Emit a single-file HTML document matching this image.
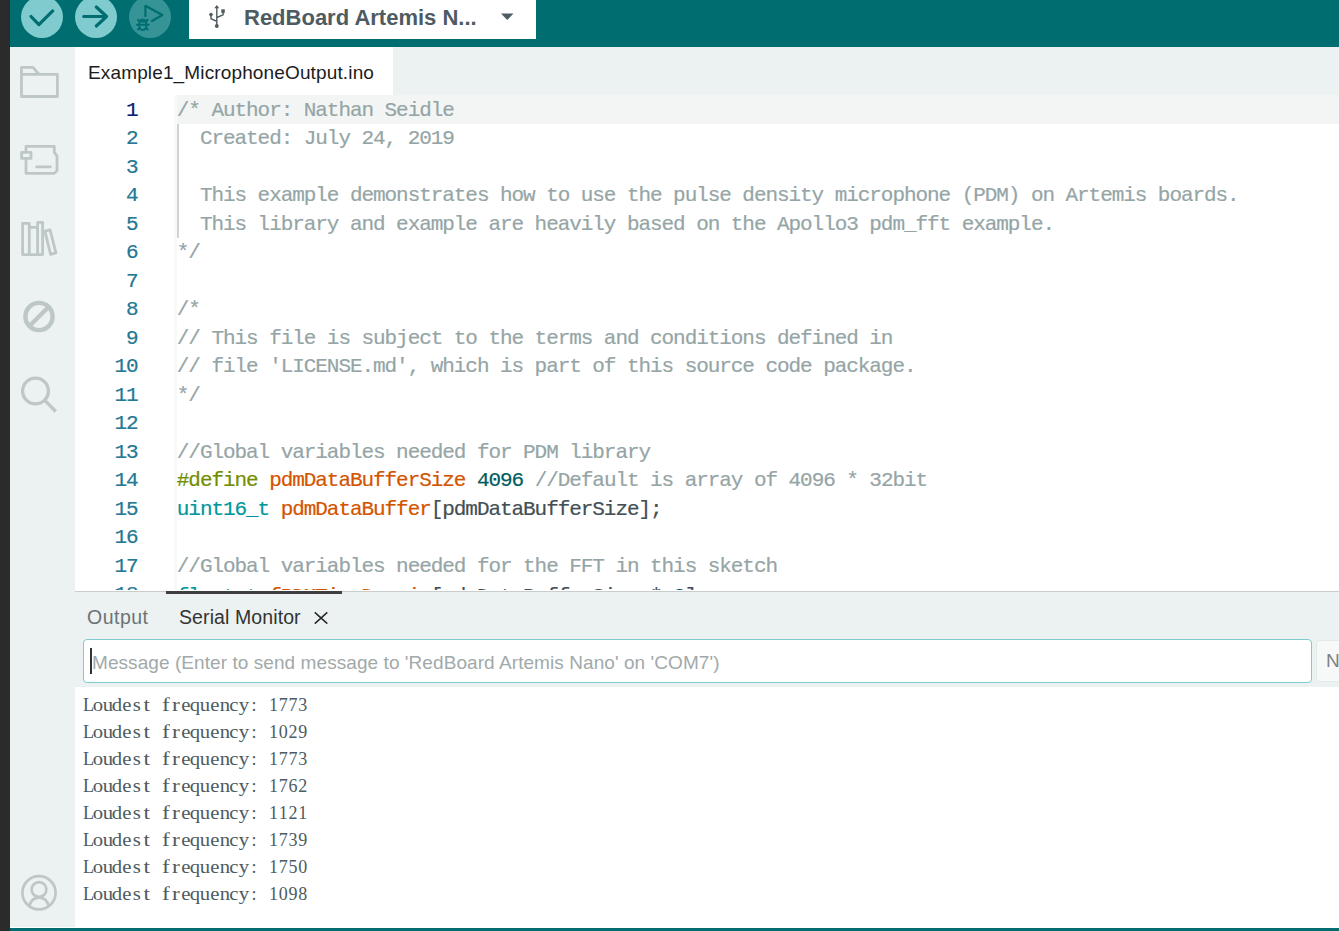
<!DOCTYPE html>
<html><head><meta charset="utf-8">
<style>
*{margin:0;padding:0;box-sizing:border-box}
html,body{width:1339px;height:931px;overflow:hidden;background:#fff;font-family:"Liberation Sans",sans-serif}
.abs{position:absolute}
#strip{left:0;top:0;width:10px;height:931px;background:#2b2b2b}
#header{left:10px;top:0;width:1329px;height:47px;background:#006d70}
.btn{position:absolute;width:42px;height:42px;border-radius:50%;background:#7fcbcd}
#board{left:189px;top:0;width:347px;height:39px;background:#fff}
#boardname{left:244px;top:3px;font-weight:bold;font-size:22px;color:#4e5b61;white-space:nowrap;line-height:30px}
#sidebar{left:10px;top:47px;width:65px;height:880px;background:#ecf1f1}
#tabbar{left:75px;top:47px;width:1264px;height:48px;background:#ecf1f1}
#tab{left:75px;top:47px;width:318px;height:48px;background:#fff}
#tabtext{left:88px;top:61px;font-size:19px;letter-spacing:0.14px;color:#1c1c1c;white-space:nowrap;line-height:24px}
#editor{left:75px;top:95px;width:1264px;height:495px;background:#fff;overflow:hidden}
#curline{left:99px;top:0;width:1165px;height:29px;background:#f3f5f5}
#margin{left:99px;top:0;width:3px;height:496px;background:#f8f9f9}
#guide{left:102px;top:29px;width:1.5px;height:114px;background:#d3d3d3}
.code{position:absolute;left:101.8px;-webkit-text-stroke:0.2px;top:1.8px;font-family:"Liberation Mono",monospace;font-size:21px;letter-spacing:-1.06px;line-height:28.5px;white-space:pre;color:#434f54}
.ln{position:absolute;left:0;top:1.8px;width:62.5px;-webkit-text-stroke:0.2px;text-align:right;font-family:"Liberation Mono",monospace;font-size:21px;letter-spacing:-1.06px;line-height:28.5px;white-space:pre;color:#237893}
.c{color:#95a5a6}.k{color:#728e00}.o{color:#d35400}.n{color:#005c5f}.t{color:#00979c}
#panel{left:75px;top:591px;width:1264px;height:96px;background:#ecf1f1;border-top:1px solid #c9cdcd}
#thumb{left:166px;top:591px;width:176px;height:2.5px;background:#3f3f3f}
#out{left:87px;top:605.3px;font-size:19.5px;color:#6b7475;white-space:nowrap;line-height:24px;letter-spacing:0.5px}
#sm{left:179px;top:605.3px;font-size:19.5px;color:#333;white-space:nowrap;line-height:24px;letter-spacing:0.1px}
#input{left:83px;top:639px;width:1229px;height:44px;background:#fff;border:1.5px solid #7fcbcd;border-radius:4px}
#caret{left:90px;top:648px;width:2px;height:26px;background:#333}
#ph{left:92px;top:650.5px;font-size:19px;letter-spacing:0.07px;color:#a1a9aa;white-space:nowrap;line-height:24px}
#le{left:1316px;top:640px;width:40px;height:42px;background:#f7f9f9;border:1px solid #e3e8e8;border-radius:3px}
#letext{left:1326px;top:649px;font-size:19px;color:#7b8283;line-height:24px}
#serial{left:83px;top:691.5px;font-family:"Liberation Serif",serif;font-size:18px;line-height:27px;white-space:pre;color:#4e5b61}
.sl{height:27px;white-space:nowrap}.sl i{font-style:normal;display:inline-block;width:9.77px;text-align:center}.sl i.w{transform:scaleX(1.15)}.sl i.w2{transform:scaleX(1.3)}
#status{left:10px;top:928px;width:1329px;height:3px;background:#006d70}
svg{position:absolute;overflow:visible}
</style></head><body>
<div id="strip" class="abs"></div>
<div id="header" class="abs"></div>
<div class="btn" style="left:21px;top:-4.4px"></div>
<div class="btn" style="left:75px;top:-4.5px"></div>
<div class="btn" style="left:129px;top:-4.5px;background:#369496"></div>
<div id="board" class="abs"></div>
<div id="boardname" class="abs">RedBoard Artemis N...</div>
<div id="sidebar" class="abs"></div>
<div id="tabbar" class="abs"></div>
<div id="tab" class="abs"></div>
<div id="tabtext" class="abs">Example1_MicrophoneOutput.ino</div>
<div id="editor" class="abs">
<div id="curline" class="abs"></div>
<div id="margin" class="abs"></div>
<div id="guide" class="abs"></div>
<div class="ln"><span style="color:#0b216f">1</span>
2
3
4
5
6
7
8
9
10
11
12
13
14
15
16
17
18</div>
<div class="code"><span class="c">/* Author: Nathan Seidle
  Created: July 24, 2019

  This example demonstrates how to use the pulse density microphone (PDM) on Artemis boards.
  This library and example are heavily based on the Apollo3 pdm_fft example.
*/

/*
// This file is subject to the terms and conditions defined in
// file 'LICENSE.md', which is part of this source code package.
*/

//Global variables needed for PDM library</span>
<span class="k">#define</span> <span class="o">pdmDataBufferSize</span> <span class="n">4096</span> <span class="c">//Default is array of 4096 * 32bit</span>
<span class="t">uint16_t</span> <span class="o">pdmDataBuffer</span>[pdmDataBufferSize];

<span class="c">//Global variables needed for the FFT in this sketch</span>
<span style="position:relative;top:2px"><span class="t">float_t</span> <span class="o">fPDMTimeDomain</span>[pdmDataBufferSize * <span class="n">2</span>];</span></div>
</div>
<div id="panel" class="abs"></div>
<div id="thumb" class="abs"></div>
<div id="out" class="abs">Output</div>
<div id="sm" class="abs">Serial Monitor</div>
<div id="input" class="abs"></div>
<div id="caret" class="abs"></div>
<div id="ph" class="abs">Message (Enter to send message to 'RedBoard Artemis Nano' on 'COM7')</div>
<div id="le" class="abs"></div>
<div id="letext" class="abs">N</div>
<div id="serial" class="abs"><div class="sl"><i>L</i><i class="w">o</i><i class="w">u</i><i class="w">d</i><i class="w">e</i><i class="w">s</i><i class="w2">t</i><i> </i><i class="w2">f</i><i class="w2">r</i><i class="w">e</i><i class="w">q</i><i class="w">u</i><i class="w">e</i><i class="w">n</i><i class="w">c</i><i class="w">y</i><i>:</i><i> </i><i>1</i><i>7</i><i>7</i><i>3</i></div><div class="sl"><i>L</i><i class="w">o</i><i class="w">u</i><i class="w">d</i><i class="w">e</i><i class="w">s</i><i class="w2">t</i><i> </i><i class="w2">f</i><i class="w2">r</i><i class="w">e</i><i class="w">q</i><i class="w">u</i><i class="w">e</i><i class="w">n</i><i class="w">c</i><i class="w">y</i><i>:</i><i> </i><i>1</i><i>0</i><i>2</i><i>9</i></div><div class="sl"><i>L</i><i class="w">o</i><i class="w">u</i><i class="w">d</i><i class="w">e</i><i class="w">s</i><i class="w2">t</i><i> </i><i class="w2">f</i><i class="w2">r</i><i class="w">e</i><i class="w">q</i><i class="w">u</i><i class="w">e</i><i class="w">n</i><i class="w">c</i><i class="w">y</i><i>:</i><i> </i><i>1</i><i>7</i><i>7</i><i>3</i></div><div class="sl"><i>L</i><i class="w">o</i><i class="w">u</i><i class="w">d</i><i class="w">e</i><i class="w">s</i><i class="w2">t</i><i> </i><i class="w2">f</i><i class="w2">r</i><i class="w">e</i><i class="w">q</i><i class="w">u</i><i class="w">e</i><i class="w">n</i><i class="w">c</i><i class="w">y</i><i>:</i><i> </i><i>1</i><i>7</i><i>6</i><i>2</i></div><div class="sl"><i>L</i><i class="w">o</i><i class="w">u</i><i class="w">d</i><i class="w">e</i><i class="w">s</i><i class="w2">t</i><i> </i><i class="w2">f</i><i class="w2">r</i><i class="w">e</i><i class="w">q</i><i class="w">u</i><i class="w">e</i><i class="w">n</i><i class="w">c</i><i class="w">y</i><i>:</i><i> </i><i>1</i><i>1</i><i>2</i><i>1</i></div><div class="sl"><i>L</i><i class="w">o</i><i class="w">u</i><i class="w">d</i><i class="w">e</i><i class="w">s</i><i class="w2">t</i><i> </i><i class="w2">f</i><i class="w2">r</i><i class="w">e</i><i class="w">q</i><i class="w">u</i><i class="w">e</i><i class="w">n</i><i class="w">c</i><i class="w">y</i><i>:</i><i> </i><i>1</i><i>7</i><i>3</i><i>9</i></div><div class="sl"><i>L</i><i class="w">o</i><i class="w">u</i><i class="w">d</i><i class="w">e</i><i class="w">s</i><i class="w2">t</i><i> </i><i class="w2">f</i><i class="w2">r</i><i class="w">e</i><i class="w">q</i><i class="w">u</i><i class="w">e</i><i class="w">n</i><i class="w">c</i><i class="w">y</i><i>:</i><i> </i><i>1</i><i>7</i><i>5</i><i>0</i></div><div class="sl"><i>L</i><i class="w">o</i><i class="w">u</i><i class="w">d</i><i class="w">e</i><i class="w">s</i><i class="w2">t</i><i> </i><i class="w2">f</i><i class="w2">r</i><i class="w">e</i><i class="w">q</i><i class="w">u</i><i class="w">e</i><i class="w">n</i><i class="w">c</i><i class="w">y</i><i>:</i><i> </i><i>1</i><i>0</i><i>9</i><i>8</i></div></div>
<div id="status" class="abs"></div>
<svg width="1339" height="931" style="left:0;top:0" viewBox="0 0 1339 931">
<g fill="none" stroke="#006d70" stroke-linecap="round" stroke-linejoin="round">
<polyline points="31,16.5 38.9,24.6 52.7,10.9" stroke-width="3.2"/>
<path d="M83.7 16.5 H106.6 M96.3 7 L106.6 16.5 L96.3 26" stroke-width="3.1"/>
<path d="M145.4 16.1 V5.8 L162.3 15 L152 21" stroke-width="2.2"/>
<ellipse cx="142.8" cy="24.8" rx="3.7" ry="5.2" stroke-width="2"/>
<path d="M137 24.8 H148.7 M138 19.9 L139.7 21 M147.6 19.9 L145.9 21 M138 29.4 L139.6 28.4 M147.6 29.4 L146 28.4 M140 21.4 H145.6" stroke-width="2"/>
</g>
<g fill="none" stroke="#4e5b61" stroke-width="1.4">
<path d="M216.8 7.5 V26 M216.8 21.3 L211 18.7 V14.6 M216.8 17.5 L223.1 14.9 V11.5"/>
</g>
<g fill="#4e5b61">
<path d="M216.8 5 L219.3 8.2 H214.3 Z"/>
<circle cx="216.8" cy="26" r="1.9"/>
<circle cx="211" cy="14.6" r="1.8"/>
<rect x="221.3" y="9.3" width="3.5" height="3.6"/>
<path d="M501 13.5 H513.5 L507.25 20 Z"/>
</g>
<g fill="none" stroke="#bec7c7" stroke-width="2.8" stroke-linejoin="round">
<path d="M21.45 67.4 H33 L39 74.3 H57.4 V96.5 H21.45 Z M21.45 74.3 H39"/>
<path d="M26 146.4 H54.3 V152.4 L57 155.8 V170.6 L54.3 173.4 H26 Z"/>
<rect x="21.6" y="152.4" width="9.4" height="6" fill="#ecf1f1"/>
<path d="M36.7 166.8 H50.4" stroke-linecap="round"/>
<path d="M22.6 254.6 V223.3 H29.3 V254.6 Z M29.3 227.3 H37.6 M37.6 254.6 V222.3 H42.6 V254.6 H22.6"/>
<path d="M44.9 231.2 L50.1 229.9 L55.9 252.9 L50.6 254.3 Z"/>
<circle cx="35.5" cy="391" r="12.9" stroke-width="3.3"/>
<path d="M45.2 400.9 L55.8 411.5" stroke-width="3.4"/>
<circle cx="39" cy="892.8" r="16.6" stroke-width="2.7"/>
<circle cx="39" cy="889.5" r="7.4" stroke-width="2.6"/>
<path d="M29.3 906 C31 900 35 897.6 39 897.6 C43 897.6 47 900 48.9 906" stroke-width="2.7"/>
</g>
<g fill="none" stroke="#bec7c7" stroke-width="4.4">
<circle cx="39" cy="316.5" r="13.6"/>
<path d="M48.5 307 L29.5 326"/>
</g>
<g stroke="#252525" stroke-width="1.45" stroke-linecap="butt">
<path d="M314.8 612.4 L327.3 623.6 M327.3 612.4 L314.8 623.6"/>
</g>
</svg>

</body></html>
